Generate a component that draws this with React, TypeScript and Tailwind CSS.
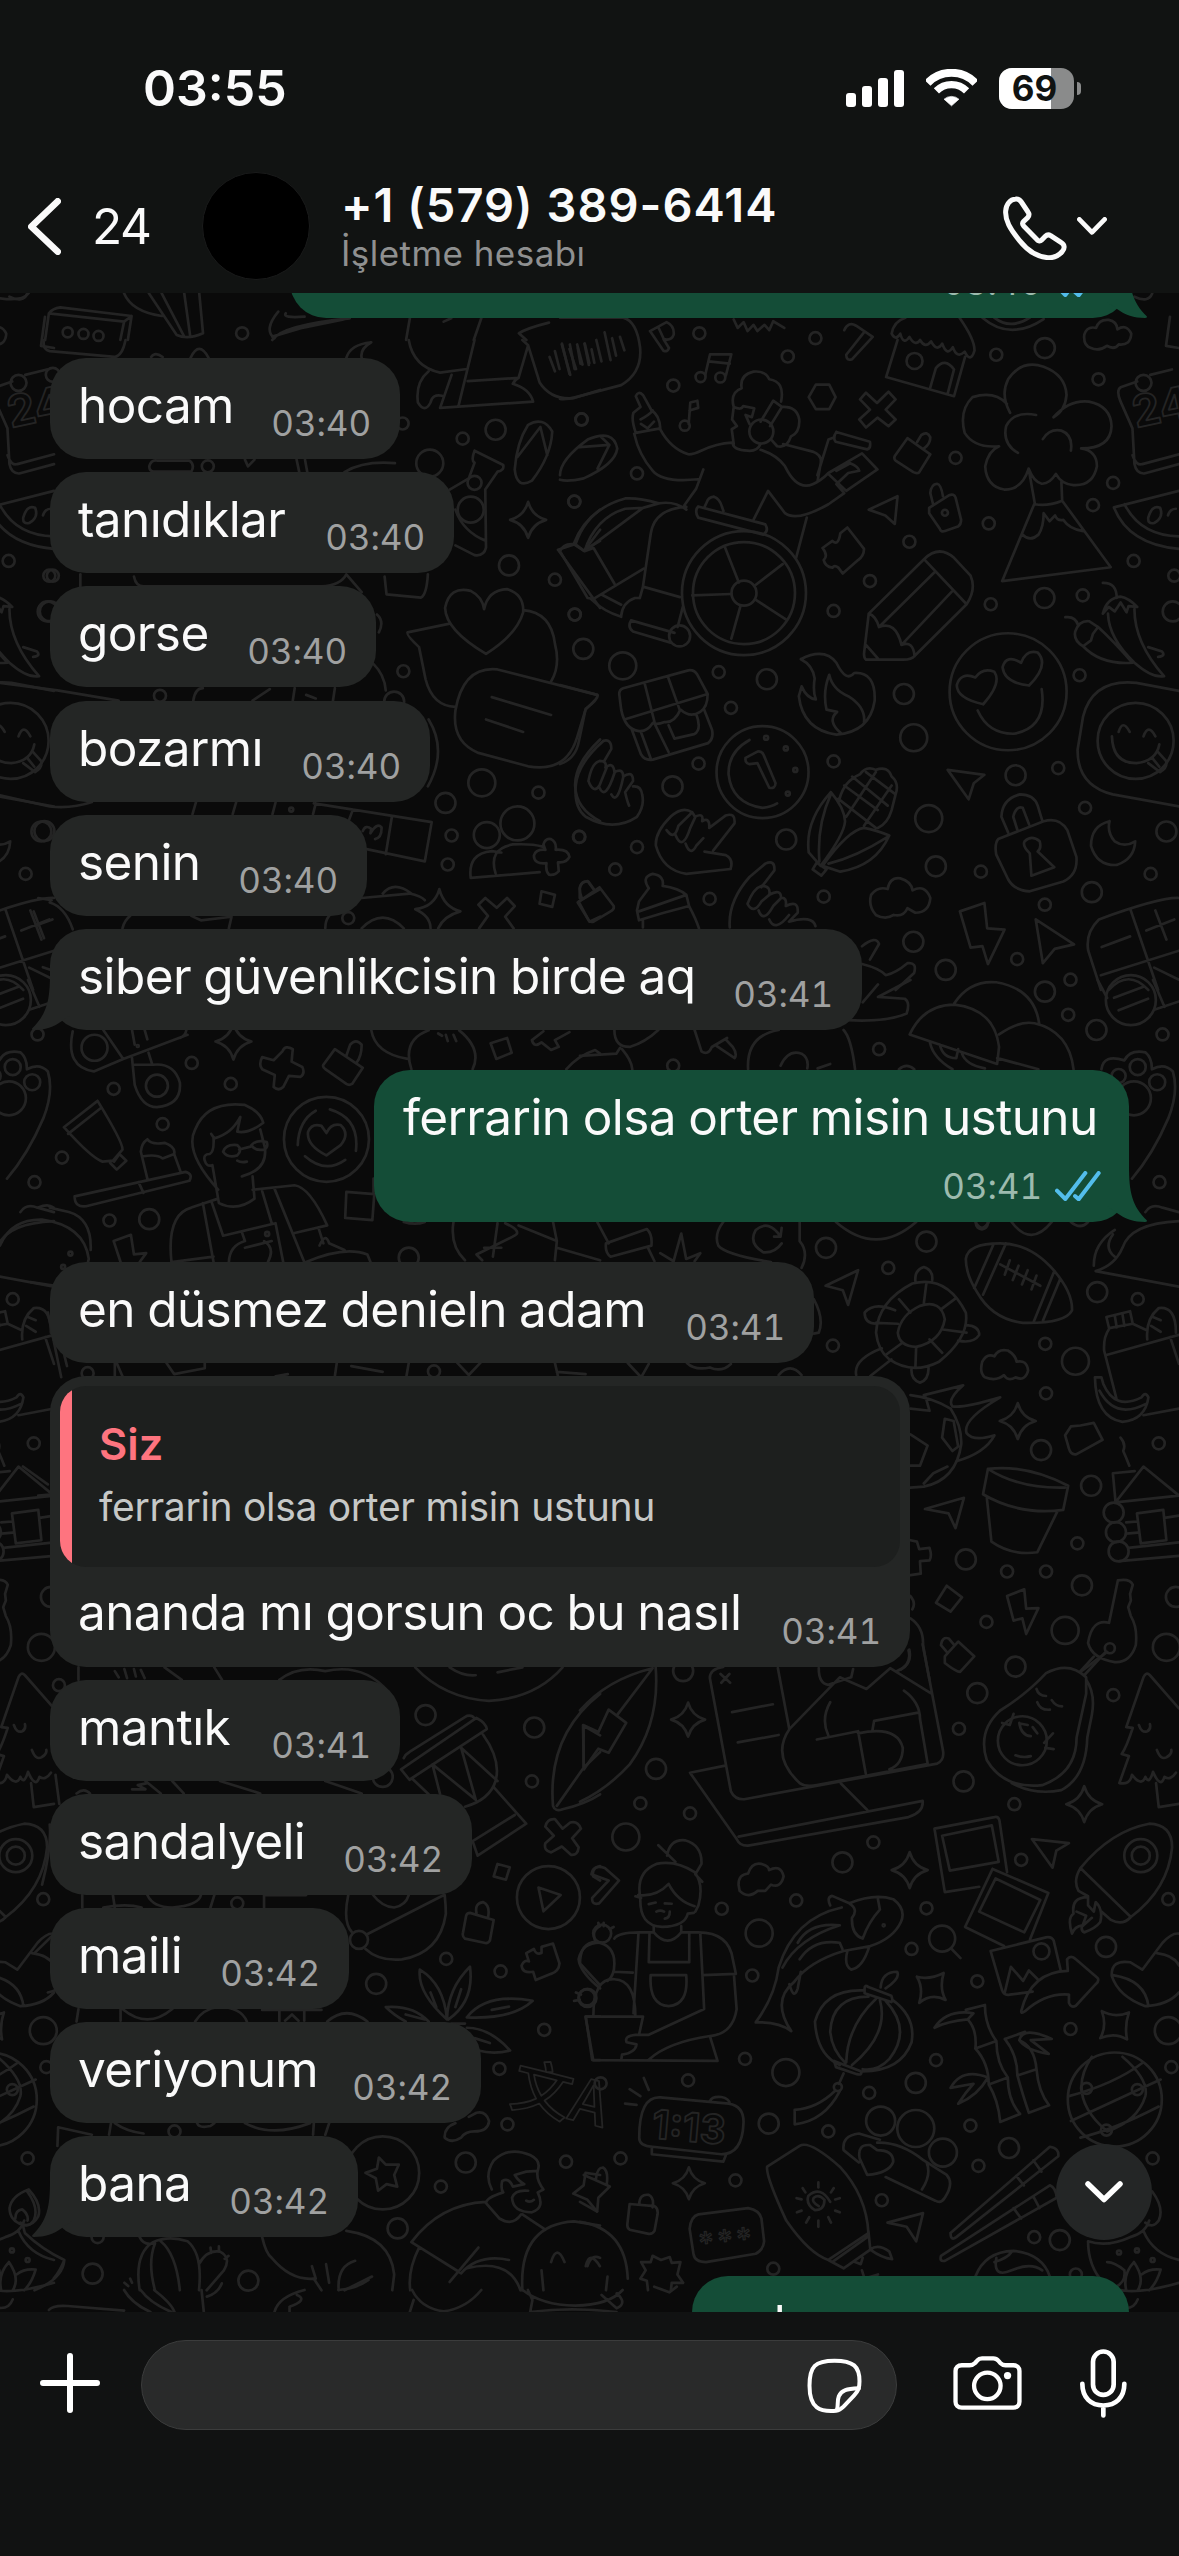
import clsx from 'clsx';

type Message = {
  text: string;
  time: string;
  width: string;
  tail?: boolean;
};

const firstGroup: Message[] = [
  { text: 'hocam', time: '03:40', width: 'w-[350px]' },
  { text: 'tanıdıklar', time: '03:40', width: 'w-[404px]' },
  { text: 'gorse', time: '03:40', width: 'w-[326px]' },
  { text: 'bozarmı', time: '03:40', width: 'w-[380px]' },
  { text: 'senin', time: '03:40', width: 'w-[317px]' },
  { text: 'siber güvenlikcisin birde aq', time: '03:41', width: 'w-[812px]', tail: true },
];

const lastGroup: Message[] = [
  { text: 'mantık', time: '03:41', width: 'w-[350px]' },
  { text: 'sandalyeli', time: '03:42', width: 'w-[422px]' },
  { text: 'maili', time: '03:42', width: 'w-[299px]' },
  { text: 'veriyonum', time: '03:42', width: 'w-[431px]' },
  { text: 'bana', time: '03:42', width: 'w-[308px]', tail: true },
];

// Every sheet is drawn in its own units and scaled onto the wallpaper.
type Sheet = {
  x: number;
  y: number;
  sx: number;
  sy: number;
  small?: number[][];
  medium?: number[][];
  large?: number[][];
  rings?: number[][];
  stars?: number[][];
  paths: string;
};

const rightTop: Sheet = {
  x: 560,
  y: 290,
  sx: 0.3948,
  sy: 0.4464,
  small: [
    [353, 97], [647, 108], [577, 149], [287, 214], [54, 290], [195, 411], [36, 474], [37, 727], [402, 856],
    [433, 936], [351, 1061], [693, 1056], [48, 1225], [195, 1248], [140, 1298], [379, 1364], [668, 1359],
    [885, 564], [785, 652], [693, 719], [1002, 376], [1086, 523], [1105, 145], [1364, 200], [1401, 432],
    [1350, 482], [1453, 607], [1556, 640], [1324, 684], [1091, 704], [1316, 863], [1262, 1071], [1330, 1160],
    [1496, 1308], [1228, 1377], [1066, 1303], [1158, 1499], [1293, 1545],
  ],
  medium: [
    [59, 804], [524, 872], [285, 1112], [573, 1231], [871, 905], [952, 1291], [895, 1460], [977, 1523],
    [1228, 130], [1227, 690], [1154, 1087], [1536, 1213], [1347, 1349], [1552, 720],
  ],
  large: [[159, 842], [896, 1003], [934, 1184]],
  rings: [
    [356, 195, 5], [406, 196, 5], [316, 304, 5], [510, 317, 12], [898, 159, 8], [975, 499, 3], [1478, 208, 8],
    [466, 679, 62], [466, 679, 51], [466, 679, 12.5], [303, 775, 10.5], [513, 1080, 46], [522, 1003, 2],
    [572, 1027, 2], [596, 1075, 2], [577, 1128, 2], [1135, 900, 58.5], [1458, 1010, 38],
  ],
  paths:
    'M0 62H160Q195 70 203 130Q208 185 155 213L40 240Q15 246 0 244M5 120L24 188M25 122L37 177M45 130L52 165M62 120L73 168M80 133L87 163M92 112L105 160M113 95L128 157M132 108L142 147M152 105L163 135' +
    'M228 92L270 72Q290 80 288 100Q282 115 262 110L276 130Q272 140 262 136ZM250 85L262 108M368 190L380 144L434 144L420 192M376 160L430 165M326 300L330 252L348 248L350 264L328 270' +
    'M192 320Q180 290 186 275L204 262L192 238Q198 225 210 235L232 270Q252 280 254 310ZM204 290Q225 280 235 270M205 300L222 310L238 295' +
    'M254 312Q280 355 325 368C350 370 370 345 435 342M188 322Q200 370 235 405Q260 432 350 424M363 402L345 445L315 482' +
    'M438 345Q440 358 475 360Q500 362 508 345M440 262Q430 230 460 220Q455 190 490 183Q520 180 530 200Q570 205 560 250M440 262L436 290L448 305L435 312L440 345M440 262Q460 270 464 260L492 265L486 285L470 280L480 300M508 295L540 248L562 262L532 305M562 262Q600 260 606 290Q608 320 585 328Q575 355 550 350L535 335' +
    'M565 345L640 362Q665 370 660 390L652 430M508 358Q550 370 570 395Q600 450 640 435Q660 428 680 410L765 366L804 402L725 450L680 412M652 415L680 335L695 330M700 318L785 340Q788 355 778 357L698 340Q690 330 700 318M700 405L735 388Q755 395 758 405L730 410L700 435L720 455L680 480Q600 520 570 500L527 450L490 515M625 510L598 600' +
    'M648 212H682L698 240L682 267H648L630 240ZM760 245L775 230L803 253L832 228L850 245L825 268L850 290L832 305L804 286L775 308L758 290L785 268Z' +
    'M875 62Q845 70 840 98Q850 115 862 98Q870 125 885 105Q900 128 912 112Q925 132 940 115Q955 140 968 120Q980 150 995 128Q1005 155 1025 138Q1040 165 1050 135Q1050 110 1012 62M855 112L826 195L998 238L1026 150M938 218L952 175Q975 150 998 178L982 232' +
    'M880 332L938 368L910 408Q905 412 895 408L850 382Q845 378 848 372ZM905 340L915 325Q930 315 938 330Q938 345 922 355M935 488L985 460Q998 455 1002 465L1016 515Q1016 525 1008 530L975 540Q965 543 962 535L935 500ZM945 480L938 455Q940 435 955 434Q965 435 970 462' +
    'M782 492L855 462L848 524L824 505ZM665 578L690 562Q705 575 710 545L728 532L770 580Q770 595 755 605L716 635L705 622Q695 615 690 622Q672 620 668 605Q680 595 665 578' +
    'M1140 275Q1115 235 1135 200Q1170 155 1225 172Q1280 190 1283 235Q1280 270 1250 285Q1290 245 1340 250Q1395 260 1397 305Q1395 355 1320 355Q1360 360 1360 395Q1350 440 1300 437Q1270 435 1256 412Q1240 435 1220 434Q1200 430 1187 400Q1170 448 1125 447Q1080 440 1077 395Q1085 360 1112 350Q1050 355 1025 320Q1010 270 1045 240Q1100 225 1132 255M1160 365Q1120 345 1130 305Q1150 270 1206 280M1223 334Q1240 310 1270 315Q1300 325 1294 360' +
    'M1187 400L1203 480Q1235 485 1272 472L1270 430M1201 480L1120 652L1395 621L1272 472M1172 548Q1190 565 1212 548Q1225 530 1225 500L1240 518L1254 505Q1260 518 1275 515Q1290 535 1325 540' +
    'M1345 130Q1325 125 1328 100Q1335 80 1358 85Q1365 65 1390 67Q1410 70 1412 88Q1435 75 1447 98Q1445 125 1415 122Q1405 135 1385 125Q1365 138 1345 130' +
    'M1462 205L1420 218Q1408 225 1420 250L1450 310L1455 390Q1460 412 1480 411L1568 390M1450 370Q1460 395 1475 390L1568 368M1495 190L1550 178' +
    'M1403 487L1568 450M1403 487Q1440 570 1568 580M1430 480Q1470 550 1568 552M1490 510Q1500 480 1520 488Q1530 510 1505 522Q1488 525 1490 510M1540 505Q1545 490 1560 490' +
    'M922 603Q960 570 998 600L1040 640Q1055 670 1030 704L898 820Q890 828 870 828L775 828Q770 825 770 815L782 725L922 603M922 603L1030 704M948 633L808 755M993 675L865 795M782 725Q800 730 808 755Q850 740 865 795Q895 785 898 820M775 795L805 825' +
    'M418 577L453 655M564 614L492 663M572 738L494 693M434 781L457 708M335 684L434 681M350 485L520 525Q530 540 515 548L350 510Q340 495 350 485M365 488L372 475Q375 465 390 463Q405 468 410 485L414 495M40 568Q70 490 165 467Q200 465 250 478Q290 472 320 492M62 585Q90 510 165 490L210 488L62 585M210 488L250 478M320 486Q240 490 230 545L210 665L202 690M0 585Q10 565 40 570L62 585L85 578L138 658M0 585L70 690L85 692L212 624M78 692Q110 720 155 732M105 682L155 705M155 730Q158 700 190 690L202 690M212 665L304 688M180 740L290 768M180 740Q170 755 185 765L280 790M311 710L298 755' +
    'M0 885L95 907Q100 915 65 938L48 1010Q40 1050 0 1062M610 827Q670 800 700 835Q725 880 745 858Q800 855 797 920Q785 990 700 996Q615 985 605 910L612 888Q625 915 648 917Q640 900 645 870Q640 840 610 827M682 862Q665 900 675 940L702 945Q675 965 712 993M682 862Q690 895 730 910Q775 935 770 968' +
    'M150 905Q150 895 160 892L325 852Q340 850 348 862L374 905Q374 935 355 945Q330 960 305 940Q290 970 265 968Q245 975 235 970Q220 990 200 988Q165 985 155 940ZM163 962L374 905M214 880L240 970M274 868L303 940M182 985L205 1040Q215 1055 235 1052L375 1015Q390 1005 385 985L365 940M205 990L230 1050M240 972L275 1035M275 975L290 1005L340 995Q360 985 345 950' +
    'M480 1008Q425 1035 427 1085Q435 1150 513 1160Q535 1158 550 1150M470 1048L500 1034Q512 1032 516 1042L546 1105Q545 1118 530 1115L500 1060L480 1062Q468 1060 470 1048' +
    'M40 1110Q45 1060 110 1010Q130 1005 130 1028L112 1055M72 1100Q80 1060 100 1055Q120 1055 115 1070Q135 1055 138 1080Q160 1070 160 1090Q185 1075 185 1100L165 1125Q170 1145 175 1155M72 1100Q85 1130 100 1110L118 1070M100 1115Q115 1145 138 1082M130 1130Q145 1155 160 1092M40 1110Q35 1160 65 1180Q135 1215 195 1180Q215 1155 208 1130Q205 1110 185 1112' +
    'M243 1245Q240 1215 280 1180Q310 1155 335 1170L342 1180Q365 1170 360 1190Q380 1180 378 1205L420 1177Q445 1170 442 1195L388 1256M366 1258L420 1266Q440 1275 432 1297L320 1308Q260 1300 243 1245M270 1210Q290 1235 300 1200L335 1170M292 1220Q310 1260 330 1205L342 1182M318 1240Q330 1270 345 1245L363 1228' +
    'M430 1428Q425 1370 480 1315L520 1285Q545 1275 543 1300L510 1338M475 1375Q490 1340 510 1335Q535 1335 530 1355Q560 1340 560 1362Q575 1360 572 1380Q605 1365 602 1395L580 1415Q640 1400 647 1425M475 1375Q490 1400 510 1370L530 1355M503 1390Q515 1420 540 1380L560 1362M530 1410Q545 1440 580 1400' +
    'M45 1372L100 1338L136 1380Q138 1388 128 1392L85 1415Q75 1418 70 1408ZM50 1362L50 1340Q55 1322 72 1325L88 1345M195 1390L200 1370L225 1340Q205 1315 235 1308Q265 1312 260 1335Q300 1340 320 1355L327 1380Q260 1395 200 1412ZM200 1392L320 1355M210 1412V1428M327 1380Q345 1410 352 1430' +
    'M708 1140Q720 1100 760 1085Q775 1065 800 1075Q830 1065 840 1090Q860 1105 850 1130L840 1165Q830 1195 805 1205M720 1110L805 1165M740 1090L830 1155M775 1080L850 1130M705 1140L800 1205M800 1080L725 1180M840 1110L770 1200M686 1125Q620 1190 630 1260L660 1290Q720 1220 722 1190Q720 1160 686 1125M686 1130Q650 1200 657 1280M665 1290Q730 1210 770 1205Q800 1210 834 1222Q800 1290 710 1303L665 1290M680 1285Q750 1270 830 1225M650 1283L675 1298L662 1312L640 1298Z' +
    'M1072 928Q1005 915 1005 885Q1015 855 1052 868Q1070 845 1100 855Q1120 880 1072 928M1188 886Q1125 880 1121 845Q1130 815 1168 835Q1180 805 1210 812Q1240 840 1188 886M1058 942Q1085 995 1150 994Q1235 980 1220 894' +
    'M1375 656Q1410 655 1410 690M1375 725Q1385 690 1420 687Q1440 690 1462 710L1440 708L1435 722L1420 700L1405 720L1390 710ZM1455 715Q1455 790 1530 865Q1500 870 1455 835Q1390 780 1388 725M1280 733Q1305 730 1312 750M1305 765Q1315 740 1340 742L1363 755L1350 770L1345 785L1325 798Q1300 785 1305 765M1363 755Q1400 785 1450 835Q1370 840 1325 798M1490 800L1525 810Q1535 820 1515 822' +
    'M1568 898L1460 880Q1350 870 1325 955L1311 1030Q1310 1110 1400 1130L1568 1157M1415 990Q1425 960 1443 990M1478 1000Q1490 970 1508 1000M1398 1000Q1400 1060 1460 1060Q1510 1055 1518 1018M1490 1060L1520 1080Q1540 1070 1535 1055L1515 1035M1500 1048L1518 1068' +
    'M1110 1230L1225 1190Q1265 1180 1285 1210L1308 1270Q1312 1310 1275 1325L1190 1347Q1150 1345 1135 1320L1105 1265Q1100 1240 1110 1230ZM1135 1215L1118 1180Q1120 1140 1165 1130Q1200 1130 1210 1155L1222 1190M1158 1208L1148 1180Q1155 1155 1172 1160L1188 1197M1190 1262Q1170 1245 1177 1235Q1195 1220 1215 1235Q1220 1250 1210 1258L1252 1293L1194 1312Z' +
    'M1392 1190Q1345 1200 1345 1245Q1360 1290 1410 1288Q1455 1275 1457 1235Q1430 1250 1405 1235Q1385 1215 1392 1190M982 1075L1075 1086L1048 1105L1035 1141ZM1013 1392L1075 1373L1082 1430L1126 1433L1084 1510L1070 1470L1040 1473ZM1205 1410L1302 1466L1253 1476L1223 1508Z' +
    'M1568 1362Q1520 1360 1365 1410Q1330 1440 1338 1480L1370 1568M1445 1388L1515 1568M1370 1535L1568 1480M1372 1472L1444 1448M1485 1435L1556 1410M1508 1390L1536 1455M1390 1568Q1440 1520 1490 1568M1505 1518L1568 1545' +
    'M800 1400Q780 1380 788 1355Q805 1335 830 1342Q835 1315 862 1318Q890 1325 893 1345Q925 1330 938 1362Q935 1395 900 1395L880 1385Q870 1405 845 1400Q825 1412 800 1400M765 1470Q800 1445 808 1465L785 1500M765 1510Q810 1520 825 1535Q850 1530 880 1508Q905 1505 897 1530L850 1568' +
    'M0 415Q0 380 70 335Q135 310 145 355Q140 390 60 422Q20 430 0 425M50 352L125 347L95 400M125 347L105 330M440 66L450 85L465 72L475 92L490 78L500 92L518 78L530 90L540 70L568 85M720 90Q730 70 750 80L792 105L740 155Q725 160 725 145L770 95M1070 62Q1140 115 1225 65M1100 62Q1140 90 1190 62M1455 15Q1490 30 1500 8M1535 125L1545 60M1568 130L1535 125',
};

const rightMiddle: Sheet = {
  x: 580,
  y: 980,
  sx: 0.382,
  sy: 0.4464,
  small: [
    [783, 155], [244, 192], [1278, 78], [1525, 122], [1517, 453], [807, 645], [1460, 715], [662, 819], [1218, 815],
    [1220, 926], [1515, 1038], [1302, 1262], [1118, 1325], [1220, 1325], [1064, 1438], [1052, 545],
  ],
  medium: [
    [1217, 26], [1352, 112], [644, 600], [907, 586], [1354, 699], [1207, 1053], [1338, 1133], [1010, 1298],
    [1314, 1356], [1140, 1538], [1560, 1382],
  ],
  large: [[1297, 854], [1270, 1457], [1535, 1495]],
  rings: [
    [1442, 45, 25], [1410, 215, 7], [1460, 195, 8], [1511, 229, 8], [1450, 265, 17], [1397, 1193, 10],
    [1403, 1237, 10], [1410, 1280, 10], [1387, 1497, 5],
  ],
  stars: [[1146, 988, 18]],
  paths:
    'M863 122Q900 55 980 55Q1085 65 1097 150L1092 188ZM980 52Q1020 0 1090 5Q1190 20 1202 98M1097 122Q1150 90 1190 97Q1280 115 1292 200M916 140Q925 175 975 200M942 145Q950 175 985 175L990 155M1000 165Q1010 190 1060 198M1092 175L1200 200' +
    'M700 90Q800 95 855 75Q865 50 850 42L780 38L865 0M780 10L740 50M1398 40L1475 15M1410 68L1487 42M1355 0L1380 40M1500 0L1530 60M1505 66L1568 48' +
    'M300 112L318 160Q335 170 345 150L385 130M358 148L405 175Q412 165 400 150L380 132M90 112Q90 150 130 150Q170 140 205 112M0 170L95 165L105 152M110 155Q135 180 137 200M45 112M440 200Q435 125 520 112M690 112Q710 130 720 200M525 192Q545 155 580 165Q600 175 595 198M622 198L655 188M835 200Q855 185 875 200' +
    'M1365 200Q1370 165 1425 180Q1440 155 1480 162Q1498 175 1497 200Q1530 185 1552 205Q1568 250 1540 310Q1500 390 1445 445' +
    'M670 542Q775 620 880 542M1130 542Q1180 600 1235 542M1035 542Q1052 568 1070 542M1285 542Q1310 560 1330 542M45 542L75 590M68 590L175 558Q190 570 187 595L80 620Q65 610 68 590M178 600L195 630M210 612L245 630L265 568L278 625L315 612L300 630M375 542Q350 570 362 595Q380 615 500 632M575 542L575 585Q600 610 580 645M528 555L525 575L508 575M525 575Q495 535 460 560Q440 590 480 610Q510 612 528 590M612 715Q640 760 625 790L612 792' +
    'M643 685L728 650L702 728L688 695ZM1010 625Q1015 590 1100 590Q1180 590 1240 650Q1290 700 1288 740Q1270 770 1160 768Q1080 760 1040 700Q1010 660 1010 625M1082 593L1032 690M1115 590L1055 705M1240 655L1188 765M1257 670L1212 763M1100 637L1205 685M1125 628L1112 660M1148 640L1133 672M1172 650L1157 682M1195 662L1182 693' +
    'M775 790Q780 720 870 680Q960 660 1010 745Q1020 800 940 855Q870 885 810 850Q780 830 775 790M832 790Q840 750 890 730Q945 715 955 760Q945 810 880 822Q835 820 832 790M835 715L865 745M907 678L900 725M985 712L945 738M1012 790L950 783M948 835L915 805M878 868L880 822M800 840L845 812M775 768L832 770M878 675Q875 650 900 643Q925 650 922 672M1012 773Q1045 775 1045 795Q1030 815 990 808M825 740Q770 720 745 745Q745 770 776 770M868 870Q865 895 890 902Q915 895 912 865M790 825Q715 850 723 885M815 850L760 887' +
    'M1060 890Q1045 880 1053 855Q1065 835 1085 843Q1095 825 1120 830Q1140 840 1143 855Q1170 850 1173 875Q1165 900 1140 890Q1120 900 1110 885Q1090 900 1060 890' +
    'M1378 755L1440 742L1447 770L1385 780ZM1400 752L1405 778M1420 748L1425 775M1385 782Q1370 800 1372 830L1405 940M1447 770L1485 785M1378 840L1568 795M1485 805Q1480 760 1515 735Q1560 730 1560 790M1500 755L1520 762M1495 775L1520 788M1475 975L1568 960M1545 800L1568 860' +
    'M1348 890H1365L1370 905Q1400 965 1470 935Q1480 920 1488 935Q1480 985 1420 990Q1350 980 1348 890M1360 920Q1400 985 1480 950' +
    'M865 930Q920 935 970 960Q1000 1000 998 1040Q985 1120 900 1135L865 1137M865 1018L910 1043L890 1088H865M905 935L915 965L865 960M955 983L978 988L990 1045L975 1055L948 1025ZM900 1128L925 1105L962 1090M900 930L1003 908Q960 940 975 955Q1000 960 1100 935Q1000 985 1012 1015Q1030 1035 1085 1020Q1060 1060 985 1078' +
    'M1270 1020L1285 1000L1310 998L1345 992L1368 1030L1300 1062Q1285 1065 1280 1050ZM1415 1025Q1430 1040 1422 1055Q1430 1070 1438 1088M1068 1095Q1170 1085 1278 1133L1265 1187Q1150 1200 1055 1152ZM1068 1095Q1150 1140 1270 1137M1065 1160L1077 1258Q1130 1290 1197 1282L1250 1190M903 1185L1005 1160L983 1228L965 1195Z' +
    'M1395 1105L1452 1100M1395 1105L1402 1170L1475 1090L1568 1155M1402 1170L1568 1155M1430 1215L1458 1213M1430 1240L1460 1238M1412 1302L1568 1290M1435 1272L1568 1260M1458 1195L1527 1187L1535 1255L1468 1262ZM1530 1205L1568 1200' +
    'M865 1255L882 1258L888 1275L915 1272Q922 1290 915 1300L890 1302L892 1330L865 1333M960 1357L1000 1383L970 1415L932 1395ZM1118 1380L1163 1365L1168 1408L1200 1407L1168 1465L1158 1430L1135 1435Z' +
    'M1408 1345Q1440 1340 1447 1355L1440 1375L1442 1390L1435 1405L1442 1425Q1460 1450 1455 1490Q1440 1530 1400 1528Q1340 1520 1330 1485Q1340 1430 1385 1440ZM1380 1505L1310 1550M955 1515L990 1482L1032 1515L995 1550Q985 1550 955 1530ZM960 1505L945 1490Q948 1470 965 1475L980 1490' +
    'M865 1430Q900 1450 898 1490L915 1568M865 1380Q880 1395 870 1410M862 1500Q870 1530 840 1545M125 858L160 890L180 860M280 858Q300 875 340 868Q370 880 395 860M520 885Q550 855 580 885' +
    'M1345 640Q1345 590 1400 560M1350 652Q1400 640 1420 600Q1440 545 1568 540M1350 652L1568 687M1480 520Q1495 500 1525 510L1568 520M1400 620Q1370 600 1395 570',
};

const rightBottom: Sheet = {
  x: 580,
  y: 1640,
  sx: 0.382,
  sy: 0.4147,
  small: [
    [158, 394], [288, 418], [768, 488], [371, 648], [566, 628], [451, 809], [907, 647], [868, 745], [1040, 823],
    [992, 214], [1137, 396], [1396, 133], [1155, 530], [1540, 625], [1284, 938], [1548, 1030], [432, 1010],
    [283, 1062], [54, 1069], [932, 1013], [757, 1092], [650, 1185], [1022, 1171], [1043, 1268], [407, 1303],
    [790, 1351], [1189, 1440], [106, 1250], [506, 1516], [1499, 1250], [1298, 1530],
  ],
  medium: [
    [199, 311], [1040, 128], [1004, 341], [687, 536], [1377, 740], [494, 1166], [879, 1068], [1123, 1225],
    [1256, 1447], [270, 75],
  ],
  large: [[120, 475], [469, 707], [539, 1043], [1540, 942]],
  rings: [
    [1158, 243, 24.5], [1468, 520, 16.5], [1468, 520, 9], [1208, 751, 8], [948, 720, 13], [58, 708, 9],
    [18, 862, 8], [675, 1078, 4], [1400, 1108, 47], [1326, 1081, 5.5], [1459, 1084, 5.5], [1378, 1182, 5.5],
    [787, 1160, 14.5], [879, 1178, 18.5], [950, 1236, 14], [795, 688, 1], [1411, 1477, 2], [1458, 1472, 2],
    [1499, 1495, 2],
  ],
  stars: [[283, 192, 17], [863, 555, 18], [1320, 396, 18], [285, 1310, 16]],
  paths:
    'M198 65Q210 200 130 300Q70 360 0 390M0 170Q70 95 190 68L98 180M8 205L48 222L75 168L121 200L75 272L48 262L10 312Z' +
    'M375 65Q340 70 340 92L395 365Q405 385 430 384L935 298Q955 290 950 265L897 10M518 68L548 215M368 82L393 103M391 82L370 103M398 174L505 155M413 247L520 229M380 303L288 320L410 480Q418 497 440 496L860 427Q900 415 897 388L415 474M683 346L752 410M548 215L680 90L750 118L812 68L918 128M548 215Q500 280 575 345Q590 355 620 350L905 300M620 240L728 220L748 322M655 150Q630 190 650 230M848 122Q890 150 890 190L910 298M765 220L770 195L885 175M728 225Q830 205 845 260Q845 300 810 312M625 68Q625 105 650 108L710 90L715 70M860 25Q870 60 830 75' +
    'M1325 90Q1280 50 1220 80Q1170 130 1100 170Q1040 220 1065 290Q1110 360 1210 350Q1300 320 1300 235L1325 130ZM1325 95Q1350 130 1340 180L1328 235Q1325 330 1260 362Q1190 375 1130 345M1195 118Q1200 135 1220 135M1197 150Q1205 170 1230 168M1235 145Q1245 160 1262 160M1150 200Q1155 230 1180 232M1155 202L1172 205M1185 210L1197 225M1140 278Q1160 285 1180 280M1105 200L1125 205L1135 178M1215 248L1238 225M1218 260L1240 263M1310 75L1345 40M1320 85L1375 30' +
    'M1568 165L1492 85Q1482 75 1475 90L1430 210L1447 212Q1430 260 1418 275L1437 280L1412 345Q1440 350 1445 325Q1470 355 1480 330Q1490 350 1500 318Q1520 360 1530 330Q1545 340 1560 320M1463 205Q1470 225 1485 220Q1495 215 1492 203M1510 265Q1520 290 1535 283Q1550 275 1548 265M1508 345L1515 403L1568 395' +
    'M928 455L1085 427Q1095 425 1098 435L1118 560M928 455L955 608L1045 595M948 472L1078 447L1096 535L968 556ZM1080 552L1226 610L1178 722M1080 552L1008 692L1110 738M1088 575L1205 627L1163 705L1045 655ZM1183 480L1280 490L1247 508L1237 549Z' +
    'M1310 550Q1390 460 1490 443Q1550 445 1550 500Q1540 600 1442 668ZM1310 550Q1290 580 1305 605L1330 618M1442 668Q1420 690 1390 675L1365 655M1330 620Q1285 620 1292 660Q1275 670 1288 708Q1295 690 1315 688Q1310 700 1320 705Q1350 695 1362 680Q1370 650 1350 632L1345 655L1330 640ZM1300 655L1325 665L1315 690L1340 670' +
    'M1075 750L1220 717Q1235 715 1240 725L1258 795M1075 750L1105 845Q1110 858 1125 855L1185 848M1112 850L1128 788L1160 822L1175 797L1200 820M1155 895Q1180 800 1277 798L1275 770Q1285 758 1298 770L1355 815Q1360 822 1350 830L1298 882Q1285 888 1280 875V855Q1220 850 1165 895Q1155 902 1155 895' +
    'M1568 708Q1550 705 1525 730L1472 795L1440 777Q1390 770 1392 810Q1410 860 1480 883Q1540 880 1568 850M1510 755Q1555 760 1568 785M1395 808Q1480 820 1488 883M973 745L996 767M882 812Q915 820 952 803Q940 840 957 868Q920 850 888 875Q900 840 882 812M1366 895Q1400 912 1437 898Q1425 930 1432 963Q1400 945 1362 960Q1380 930 1366 895' +
    'M158 622Q145 560 200 540Q250 530 300 560Q325 590 310 640L302 655M152 615Q200 620 232 588Q255 630 300 642M158 622Q155 690 215 692Q275 690 282 660L298 658M145 618L160 622M205 495L250 535M228 520Q235 480 275 483Q320 495 318 540L302 565L320 583M180 637L198 633M222 635L240 636M200 655Q210 650 220 655M235 655Q235 670 222 672M193 690V705Q230 745 265 705V690' +
    'M90 720Q100 705 155 705H193M267 705H310Q390 705 400 770L408 805L322 808M153 708L140 900M315 708L325 890L180 952H145Q115 955 122 970L148 975Q145 995 110 1000L108 1012M182 708L180 777H286V708M185 808H278Q285 880 232 883Q180 880 185 808M90 800L138 802M403 808L410 890Q400 950 340 955Q230 970 180 1012M340 955L360 1015L32 1013L15 908L165 908L155 950M35 905Q35 815 90 818Q145 820 145 908M50 830L0 780Q0 730 42 728Q90 735 90 780Q90 810 72 822M50 690L48 682M62 690V682M78 697L88 692' +
    'M30 565Q35 540 65 550L102 580L50 635Q30 640 32 622L75 580ZM415 590Q415 565 440 563Q450 535 475 540Q495 545 495 555Q525 540 533 570Q525 600 500 590L485 605L465 605Q440 625 418 605Z' +
    'M655 640Q645 620 660 617L705 635M705 635Q770 610 820 625Q855 650 840 680Q820 720 760 738L690 750Q600 775 560 825Q500 870 553 943Q520 920 460 922Q510 860 520 790Q560 670 685 645M705 635Q730 650 712 670Q710 710 740 720Q755 680 785 650L780 625M757 740Q740 790 710 795Q690 785 700 750M530 790Q570 720 680 688Q600 680 570 730M575 770Q610 720 680 730L687 745M548 830Q560 870 570 840L578 800' +
    'M745 845Q640 840 615 920Q620 1000 680 1025M818 868Q880 910 868 970Q840 1040 740 1040M745 840Q745 830 755 837L815 858Q820 868 815 873L745 852ZM665 1015L735 1040Q740 1050 725 1047L670 1030ZM755 860Q660 860 655 945Q660 990 695 1020M775 865Q700 930 697 1018M785 868Q810 950 712 1025M800 870Q870 940 810 1010Q780 1040 740 1035M787 838Q790 800 830 800Q840 815 800 840M690 1045L678 1070M668 1087Q620 1130 562 1133V1168Q640 1160 680 1088' +
    'M928 935Q960 890 1030 900L1015 915Q960 920 928 935M1010 892L1060 880Q1060 930 1090 967L1035 985Q1040 940 1015 915M1090 967Q1090 1020 1120 1055L1070 1072Q1070 1020 1035 985M1120 1055Q1120 1110 1152 1143L1100 1162Q1095 1110 1070 1072M970 1080Q1000 1030 1068 1055Q1040 1100 990 1118Q1010 1090 1030 1070L970 1080M1112 962L1165 945M1112 962Q1145 1000 1145 1050L1195 1035Q1190 980 1150 965M1145 1050Q1160 1100 1175 1140L1228 1122Q1200 1090 1195 1035M1150 965Q1160 930 1235 962L1180 965L1227 998Q1170 990 1150 965' +
    'M155 1200Q155 1100 210 1103L390 1118Q430 1125 428 1165Q425 1240 370 1240L190 1222Q155 1220 155 1200ZM340 1112Q345 1100 370 1102Q390 1105 392 1118M188 1225V1240L375 1258L382 1242M130 1083L158 1100M167 1056L180 1085M118 1118L148 1121' +
    'M1340 1005Q1270 1100 1380 1185Q1460 1160 1480 1100Q1490 1060 1420 1005M1280 1100Q1400 1070 1472 1020M1285 1160L1460 1085L1520 1060M1310 1200Q1400 1180 1515 1125' +
    'M732 1250Q725 1215 760 1218L778 1230Q820 1230 820 1258Q810 1285 752 1290ZM778 1212Q840 1210 900 1255L960 1290Q980 1310 955 1345Q945 1360 930 1352L800 1295M895 1325Q920 1290 908 1262M730 1260L690 1230Q685 1195 730 1190L785 1205' +
    'M490 1270Q485 1290 540 1400Q600 1480 650 1495L755 1430Q750 1340 680 1270Q600 1205 575 1220ZM650 1495L690 1515L760 1470L755 1425M660 1500L752 1440M720 1500L735 1505L740 1490M760 1470Q780 1455 810 1475L817 1493Q790 1490 760 1470M625 1365Q605 1355 612 1345Q625 1335 640 1350Q640 1375 615 1375Q590 1360 598 1340Q630 1315 655 1355M624 1308V1320M583 1322L590 1332M664 1322L657 1332M567 1346L580 1349M668 1349L680 1346M568 1380L580 1376M668 1376L680 1380M592 1405L600 1392M657 1405L650 1392M624 1400V1415' +
    'M970 1430L1230 1222Q1255 1225 1252 1245L985 1440Q970 1450 970 1430M1187 1255L1208 1282M1142 1292L1162 1315M945 1485L1230 1315Q1245 1320 1248 1345L955 1497Q940 1500 945 1485M1187 1342L1203 1370M1135 1370L1155 1395M805 1405L898 1382L880 1450L855 1415Z' +
    'M287 1420Q290 1390 310 1385L440 1370Q470 1375 475 1395L482 1450Q480 1470 460 1480L330 1500Q300 1500 297 1480ZM130 1360L195 1365Q205 1370 203 1385L195 1425Q190 1433 180 1432L130 1422Q123 1418 124 1408ZM155 1362Q155 1335 180 1338Q195 1345 190 1368' +
    'M160 1500L185 1500L190 1485L212 1495L235 1488L240 1502L263 1500L255 1530L270 1550L240 1550L238 1568M160 1500L172 1520L158 1540L175 1545L178 1568M10 1290L40 1302L78 1318L48 1345L45 1378L0 1355M42 1298Q45 1272 60 1272Q75 1280 70 1312M0 1403Q120 1420 125 1540M15 1510Q25 1470 52 1510M72 1535L68 1568' +
    'M1035 1535Q1060 1475 1135 1473Q1210 1480 1230 1535M1090 1490Q1080 1540 1130 1520Q1180 1500 1210 1520M1085 1500Q1120 1490 1130 1475M738 1520L745 1540L780 1530' +
    'M1330 1450Q1330 1510 1370 1550Q1420 1590 1568 1550M1330 1450Q1380 1465 1440 1440Q1480 1430 1490 1400M1475 1425Q1500 1480 1568 1495M1498 1330Q1530 1370 1515 1400Q1500 1420 1480 1405M1380 1500Q1400 1500 1425 1520Q1430 1550 1400 1560M1450 1500Q1420 1530 1430 1568M1450 1500Q1480 1540 1460 1568M1470 1530Q1490 1515 1520 1518Q1510 1550 1490 1568M1360 1565Q1370 1610 1420 1610Q1450 1615 1460 1590',
};

const leftTop: Sheet = {
  x: 0,
  y: 340,
  sx: 0.3827,
  sy: 0.4464,
  small: [
    [1052, 187], [1209, 221], [1520, 178], [1501, 362], [1450, 537], [1502, 615], [138, 528], [1054, 742],
    [418, 797], [1180, 1110], [1170, 1175], [1407, 1014], [1514, 1113], [543, 283], [910, 1295],
  ],
  medium: [[1295, 201], [1330, 505], [1164, 1037], [116, 1100], [130, 608]],
  large: [[1123, 276], [1259, 992]],
  rings: [[1240, 320, 7], [1230, 380, 13], [1352, 1083, 17], [1272, 1109, 13], [1030, 810, 10], [138, 78, 7], [761, 1052, 2]],
  stars: [[1380, 403, 18]],
  paths:
    'M115 0Q110 20 130 25L300 38Q320 35 328 0M395 38Q405 25 425 38M498 40Q520 0 545 40M905 40Q915 10 970 5Q940 20 945 40' +
    'M1068 0Q1080 60 1150 73L1220 65M1240 0L1198 148M1120 70Q1085 95 1092 140Q1110 165 1125 140Q1130 120 1155 125M1180 78L1150 152L1393 138Q1385 110 1340 98Q1345 90 1355 85L1380 12L1365 0M1222 92L1355 85M1380 12L1410 95Q1440 135 1500 130L1568 112M1436 38L1450 70M1450 25L1462 65M1468 10L1490 78M1488 20L1505 65M1508 10L1522 55M1528 8L1540 52' +
    'M1345 290Q1350 230 1380 190Q1420 170 1443 205Q1440 260 1390 315Q1350 335 1345 290M1352 262L1412 195L1430 258' +
    'M1240 248L1315 280Q1318 292 1300 295L1268 335L1270 465Q1265 485 1240 482L1190 460M1240 248Q1230 270 1240 275L1225 310L1175 335M1190 380Q1210 430 1270 450M1458 470L1568 600M1458 470L1500 458L1525 472L1568 450M1500 455Q1520 410 1568 380M1528 470L1568 425' +
    'M1270 703Q1165 650 1163 600Q1175 550 1230 562Q1260 575 1265 603Q1275 560 1325 558Q1370 570 1367 610Q1350 660 1270 703M1172 636L1065 655Q1060 660 1095 688L1112 760Q1130 820 1190 822M1367 605Q1440 610 1450 680Q1465 730 1440 765M1190 830Q1210 730 1300 738L1560 795Q1565 800 1530 828L1508 890Q1480 970 1380 955L1250 925Q1180 900 1190 830ZM1285 800L1440 840M1270 850L1367 878M1568 895Q1500 950 1503 1000Q1505 1050 1568 1078' +
    'M1230 1205Q1222 1150 1285 1145L1310 1148M1230 1205L1410 1192M1295 1195Q1275 1140 1340 1130Q1390 1128 1418 1135M1420 1130Q1425 1115 1440 1118Q1455 1125 1452 1142Q1485 1140 1488 1158Q1480 1172 1458 1170L1460 1190Q1450 1200 1435 1198Q1425 1190 1428 1172Q1395 1175 1395 1155Q1400 1140 1425 1142ZM820 1038L1128 1080L1110 1168L955 1140M922 1052L910 1080M1024 1068L1008 1152M948 1100Q955 1085 970 1095L968 1105Q985 1080 997 1092Q998 1115 980 1118' +
    'M985 615Q1005 630 990 655M1005 530L1010 570L1100 577Q1115 570 1118 525M975 725Q1005 750 1008 785M1120 850Q1170 920 1118 1000M505 808Q510 780 530 780M660 808L705 782M770 780L765 808M800 795L825 803M875 780L870 808M210 555V525M350 530Q355 552 375 552H840Q890 550 905 525L945 565M390 283Q395 268 410 270H495Q510 280 500 295H400Q390 293 390 283M640 268L648 283L665 268M775 268L782 296M797 268L803 296M900 296Q950 270 1032 276M512 1036L503 1062M617 1036L608 1062M720 1036L712 1062M825 1038L818 1062M320 1318Q325 1300 340 1290M500 1290L525 1300L605 1292L598 1318M850 1318Q850 1300 860 1290M945 1250L1070 1240Q1100 1245 1110 1255M1000 1240Q1030 1210 1075 1240M945 1318Q1000 1270 1055 1318M1148 1230Q1160 1270 1203 1280Q1160 1290 1145 1318M1148 1230Q1135 1270 1085 1275Q1125 1290 1125 1318' +
    'M1250 1265L1268 1250L1298 1272L1325 1250L1345 1268L1320 1292L1342 1318M1250 1265L1275 1290L1252 1318M1415 1235L1450 1243L1443 1270L1410 1263ZM1512 1258L1568 1230M1512 1258L1540 1303L1568 1292M1520 1250Q1505 1215 1535 1212L1555 1235' +
    'M0 768L150 785L310 808M0 1020L130 1045Q190 1050 240 1035M130 1260Q170 1270 190 1320M100 1250L135 1255M88 1280L115 1340M92 1312L137 1298M112 1405L135 1412',
};

const leftMiddle: Sheet = {
  x: 0,
  y: 1000,
  sx: 0.3827,
  sy: 0.4464,
  small: [[297, 199], [501, 141], [603, 188], [425, 278], [162, 353], [286, 494], [1134, 832], [229, 836]],
  medium: [[390, 491], [1068, 577]],
  rings: [[247, 107, 13], [410, 192, 11], [853, 312, 42.5], [698, 524, 2], [184, 568, 2], [165, 598, 2], [360, 103, 1]],
  stars: [[610, 93, 18]],
  paths:
    'M190 70Q170 150 245 160L322 132L490 78M270 67L322 132M345 67L352 100M378 67L385 88M345 130L352 190Q370 240 410 240Q475 235 470 185Q455 140 400 145H352M388 118L398 145M487 67Q485 80 470 85M738 115Q745 100 765 110L762 138L790 150Q798 165 785 172L755 170L740 195Q728 205 715 195L718 168L685 155Q675 145 685 128L715 135Z' +
    'M875 110L948 152L920 188Q912 192 905 188L850 155Q842 150 845 145ZM905 125L915 100Q930 85 945 100Q945 125 932 140M255 226L167 285Q240 355 268 362L295 360L320 335Q322 320 255 226M262 243L178 300M298 362L312 345L330 360L305 380L288 365' +
    'M570 425Q480 340 510 290Q540 225 640 235Q680 250 688 275Q650 300 620 295L628 262Q605 300 560 310L552 300M558 310Q560 340 548 345Q530 345 535 360Q540 375 555 370L572 455Q620 475 665 445L660 395M680 290L692 330Q700 380 632 395M620 360Q630 365 645 362M583 340Q590 322 620 325Q635 335 620 348Q595 355 583 340M657 325Q670 312 697 318Q702 330 690 335Q665 338 657 325M625 335L657 328' +
    'M448 587Q435 480 500 465L570 445M530 455L558 587M552 450L583 528L720 500L740 587M660 425L770 415Q810 420 855 505L770 522M685 428L710 500M717 422L795 587M832 510L845 545M598 587Q600 550 640 540L632 520M640 555L710 540M700 587Q720 555 690 540M800 587Q900 550 960 570L968 587M835 550Q850 520 860 545L900 560M448 587L558 575' +
    'M195 440L485 385Q505 390 495 405L225 462Q195 465 195 440M362 408L375 432M385 400L368 340Q370 320 385 312Q395 325 430 320Q460 330 455 345L472 385M375 350Q410 345 425 355L455 345' +
    'M825 248Q780 270 778 325M862 245Q940 265 930 338M797 350Q850 390 902 358M853 348Q800 325 805 295Q815 275 840 282L853 298Q865 275 890 280Q915 300 890 325L853 348M905 430L978 435L973 493L902 488ZM976 430V400M297 540L342 526L350 570L382 567L365 587M297 540L315 587' +
    'M0 550Q30 490 110 492Q220 505 232 580L230 587M130 465L180 475Q240 490 237 560M140 465Q125 455 100 465M140 640L80 632M140 697L175 820M125 700L160 845M125 1085L60 1045M100 1110L130 1108' +
    'M1185 497Q1175 550 1215 583M1300 500L1288 575M1265 555H1310M1320 500Q1370 520 1340 530L1245 570L1260 583M1355 505L1455 540L1450 583M1445 497L1455 540M1455 555L1568 583M1055 497Q1085 505 1110 497M970 67Q980 120 1065 132M1075 155Q1050 90 1120 68M1200 68Q1260 110 1235 155M1282 97L1325 85L1337 118L1297 132ZM1145 75L1155 80M1165 78L1170 92M1185 78L1192 92M1390 90L1420 70M1390 90Q1395 108 1415 95L1440 112L1460 105L1450 90L1488 72M1480 155Q1510 125 1555 112L1568 120' +
    'M300 813V843M305 813L320 843M435 813L455 838L535 825V813M880 813L875 843M918 820L1000 833M1068 813L1062 843M1195 813L1225 840L1255 813M1450 813L1458 843M1455 833L1530 838M720 843L752 838',
};

const leftBottom: Sheet = {
  x: 0,
  y: 1640,
  sx: 0.3827,
  sy: 0.4147,
  small: [
    [154, 109], [1390, 341], [620, 635], [1166, 769], [1308, 799], [1422, 940], [1305, 1034], [1326, 1168],
    [1479, 1258], [1152, 1318], [456, 1185], [255, 1440],
  ],
  medium: [[1112, 181], [1396, 211], [983, 829], [1217, 1260], [1039, 1419], [242, 1528], [649, 1545], [1000, 330]],
  rings: [[938, 723, 9], [1433, 621, 31.5], [1000, 1285, 36.5], [1535, 863, 9]],
  paths:
    'M1048 312L1245 188Q1270 200 1272 215L1070 337ZM1055 285Q1060 275 1070 270L1220 183Q1235 180 1240 190M1078 335L1120 372M1130 300L1150 372M1130 300L1243 385L1205 260L1300 340M1262 228Q1310 290 1295 340Q1280 385 1215 402M1290 355L1375 443L1248 520L1235 485L1345 422M1568 130Q1430 230 1445 400Q1450 415 1470 408Q1530 395 1568 372M1568 230L1525 207V308L1455 400M1525 308L1568 270' +
    'M1425 450Q1430 430 1450 432L1470 455L1490 440Q1510 435 1518 455L1495 478L1512 500Q1510 520 1492 518L1468 498L1440 512Q1420 508 1425 490L1447 472ZM1300 540L1332 548L1322 578L1290 570ZM1407 597L1465 615L1420 654ZM1228 658L1290 675L1280 725Q1275 733 1265 730L1215 720Q1207 715 1210 705L1218 665Q1220 658 1228 658M1245 658Q1240 635 1262 632Q1282 640 1275 670M1375 755L1395 745Q1400 760 1415 755L1415 740L1445 732L1462 780Q1460 800 1440 805L1400 820L1393 800Q1365 805 1363 785Q1370 770 1382 775Z' +
    'M910 615Q895 680 920 705M955 745Q990 775 1050 770Q1150 755 1165 660Q1165 640 1162 615M958 710L1160 615M975 615Q1000 645 1030 645Q1060 640 1068 615M1168 915Q1090 850 1097 795Q1160 830 1168 915Q1170 840 1228 788Q1240 870 1172 915M1125 850L1140 885M1205 842L1190 885M1220 910Q1270 850 1392 870Q1340 915 1220 910M1285 892L1330 884M1120 920Q1080 880 1008 885Q1030 905 1060 920M1060 903L1110 915M1220 935Q1280 935 1333 990Q1290 1000 1250 990M1240 960L1280 972M1180 925H1215' +
    'M990 1248L1008 1265L1042 1265L1030 1290L1038 1318L1010 1312L988 1328L982 1298L955 1285L985 1275ZM1190 1165Q1160 1175 1162 1200Q1180 1215 1205 1200Q1215 1185 1240 1185Q1275 1185 1278 1160Q1270 1135 1245 1140L1225 1150' +
    'M1285 1325Q1265 1290 1290 1255Q1330 1220 1385 1242Q1415 1255 1405 1280L1375 1282L1345 1290Q1355 1305 1370 1312L1340 1318Q1330 1295 1312 1305Q1308 1325 1315 1332Q1270 1345 1270 1358L1305 1395Q1340 1415 1362 1385M1405 1280Q1400 1300 1420 1325L1405 1332Q1425 1370 1390 1380Q1340 1380 1338 1345Q1345 1325 1380 1328M1375 1352Q1385 1358 1395 1350M1270 1355Q1150 1360 1075 1452L1205 1527Q1250 1480 1330 1495M1095 1465Q1065 1520 1072 1568M1250 1465L1175 1548M1365 1385L1425 1422M1220 1515Q1330 1490 1360 1568' +
    'M1365 1568Q1355 1410 1500 1402L1568 1412M1440 1500Q1455 1455 1475 1500M1535 1510Q1545 1480 1568 1490M1415 1520L1420 1568M1568 1290L1530 1285L1525 1315L1498 1335L1535 1350L1560 1378M1568 730Q1520 730 1512 770Q1515 800 1568 840M1568 908H1530L1550 1013H1568M1505 850L1518 855M1500 870L1515 868M1568 690Q1545 700 1555 725M1568 545Q1545 550 1550 570L1568 580' +
    'M365 1568Q350 1480 400 1452Q440 1435 490 1450Q530 1480 520 1568M405 1455Q385 1500 405 1568M420 1450Q460 1480 470 1568M520 1505Q540 1470 575 1475Q605 1490 585 1520L540 1568M550 1465L552 1478M572 1462V1475M597 1485L587 1492M365 1440Q375 1460 400 1455M325 1550L335 1558M340 1540L345 1550M685 1440Q695 1480 710 1490Q760 1545 820 1540L840 1568M905 1425Q1020 1440 1030 1530L1025 1568M815 1510L825 1540M852 1505L860 1550M885 1568Q880 1510 928 1497M900 1568L972 1535' +
    'M25 1370Q30 1340 75 1325Q110 1360 100 1390Q85 1415 60 1410Q25 1400 25 1370M40 1395Q40 1375 58 1373Q75 1385 72 1400M60 1412L65 1430Q110 1470 168 1495Q165 1540 90 1568M140 1540Q158 1520 168 1495' +
    'M150 1220L152 1175L240 1193M290 1165L285 1193M300 1165Q330 1185 375 1190M515 1165Q520 1178 550 1172L560 1165M640 1165Q710 1200 810 1165M860 1165L850 1193M820 1165L818 1193M205 890L200 920M315 890V918M320 890Q385 940 450 890M510 920Q530 890 570 885Q630 885 645 920M730 890V920M795 890V918M745 918L763 903L780 918M685 892H840M855 920Q905 880 960 920M215 615V645M295 615L300 645M385 615Q400 645 450 645Q520 640 525 615M560 615L550 645M690 645V615L800 615M270 645Q330 635 370 645M380 340L420 370M450 340L480 370M575 340L680 370M850 340L945 370M345 360H380L360 350L385 345M200 370Q220 355 235 370' +
    'M730 96Q780 60 850 75Q950 55 1015 125M1085 66Q1160 140 1278 147Q1400 140 1470 66M1175 66Q1210 88 1243 85M1300 78L1365 66M205 66V96M300 75L310 90M325 70L332 92M350 70L355 88M368 72L378 92M430 66L475 96M560 66L580 96' +
    'M130 445Q135 500 110 590M140 710L90 755M125 850Q150 845 170 830M145 325L155 395',
};

const topEdge: Sheet = {
  x: 0,
  y: 0,
  sx: 0.752,
  sy: 0.3333,
  small: [[322, 1000]],
  rings: [[90, 997, 5], [111, 1002, 5], [131, 1008, 5]],
  paths:
    'M0 895Q30 905 38 880M165 880Q175 935 215 948M198 880L235 1005Q250 1020 270 1000L265 880M215 880L245 1010M245 880L253 1010M60 1020L65 940Q70 925 80 922L175 948L170 1020M65 940L165 965L160 1020M165 965L175 948M362 1020Q375 975 465 955M362 1010L400 985L465 955M370 935Q350 990 365 1015M380 940Q375 955 405 950M545 955L540 1020M640 955L630 1020M590 965L600 955M690 1000Q700 985 730 968M690 1000L700 1020',
};

const bottomEdge: Sheet = {
  x: 0,
  y: 2240,
  sx: 0.752,
  sy: 0.3333,
  paths:
    'M187 150Q200 190 228 216M205 150Q228 190 232 216M268 150L271 216M295 130Q290 160 275 170M165 150Q175 190 200 216M65 210Q70 195 90 198L165 212M365 216Q370 170 405 150M395 165Q410 180 385 200V216M545 216L550 180M548 150Q560 205 590 214Q620 205 640 150M705 216L708 180L702 150M695 150Q720 195 765 197Q810 195 828 150M800 165L820 205Q835 190 820 160M705 216Q760 200 820 216M870 140L890 157L900 140M450 150Q475 145 490 120',
};

const Doodles = ({ x, y, sx, sy, small = [], medium = [], large = [], rings = [], stars = [], paths }: Sheet) => {
  const circles = [
    ...small.map(([cx, cy]) => [cx, cy, 6]),
    ...medium.map(([cx, cy]) => [cx, cy, 10]),
    ...large.map(([cx, cy]) => [cx, cy, 13.5]),
    ...rings,
  ];
  return (
    <g>
      <path
        d={paths}
        transform={`translate(${x} ${y}) scale(${sx} ${sy})`}
        vectorEffect="non-scaling-stroke"
      />
      {circles.map(([cx, cy, r], i) => (
        <circle key={i} cx={x + cx * sx} cy={y + cy * sy} r={r} />
      ))}
      {stars.map(([cx, cy, r], i) => (
        <path
          key={i}
          d="M0 -1Q.22 -.22 1 0Q.22 .22 0 1Q-.22 .22 -1 0Q-.22 -.22 0 -1Z"
          transform={`translate(${x + cx * sx} ${y + cy * sy}) scale(${r})`}
          vectorEffect="non-scaling-stroke"
        />
      ))}
    </g>
  );
};

const RightDoodles = () => (
  <>
    <Doodles {...rightTop} />
    <Doodles {...rightMiddle} />
    <Doodles {...rightBottom} />
    <text x={1136} y={428} fontSize={44} fontWeight={700} strokeWidth={1.8} transform="rotate(-12 1136 428)">
      24
    </text>
  </>
);

const Wallpaper = () => (
  <svg
    className="absolute inset-x-0 top-0 h-[2019px] w-[1179px] font-['Inter']"
    viewBox="0 293 1179 2019"
    fill="none"
    stroke="#242424"
    strokeWidth={2.7}
    strokeLinecap="round"
    strokeLinejoin="round"
    aria-hidden="true"
  >
    <RightDoodles />
    {/* the tile repeats every 1125px */}
    <g transform="translate(-1125 0)">
      <RightDoodles />
    </g>
    <Doodles {...leftTop} />
    <Doodles {...leftMiddle} />
    <Doodles {...leftBottom} />
    <Doodles {...topEdge} />
    <Doodles {...bottomEdge} />
    <text x={651} y={2138} fontSize={40} fontWeight={700} strokeWidth={1.8} transform="rotate(5 651 2138)">
      1:13
    </text>
    <text x={700} y={2254} fontSize={30} fontWeight={400} letterSpacing={4} strokeWidth={1.2} transform="rotate(-6 700 2254)">
      ***
    </text>
    <text
      className="font-['Noto_Sans_CJK_SC']"
      x={508}
      y={2104}
      fontSize={60}
      fontWeight={500}
      strokeWidth={1.8}
      transform="rotate(14 508 2104)"
    >
      文A
    </text>
  </svg>
);

const Ticks = () => (
  <svg className="h-[30px] w-[46px]" viewBox="347 330 138 90" fill="none" stroke="#53bdeb" strokeWidth={12} strokeLinecap="round" strokeLinejoin="round">
    <path d="M353 389L378 414L438 336M407 405L418 415L478 336" />
  </svg>
);

const Tail = ({ side }: { side: 'left' | 'right' }) => (
  <svg
    className={clsx(
      'absolute bottom-0 h-[56px] w-[50px]',
      side === 'right' ? '-right-[18px] fill-[#144d37]' : '-left-[18px] -scale-x-100 fill-[#242625]'
    )}
    viewBox="0 0 50 56"
  >
    <path d="M32 0C32 26 35 40 50 54.5Q50 56 48 56C37 56 28 53 20 47L10 40V0Z" />
  </svg>
);

const Time = ({ children, green }: { children: string; green?: boolean }) => (
  <span
    className={clsx(
      'text-[35px] leading-10 tracking-[-0.1px] tabular-nums',
      green ? 'text-[#9dbbae]' : 'text-[#a0a1a1]'
    )}
  >
    {children}
  </span>
);

const messageText = 'whitespace-nowrap text-[49.5px] leading-[60px] tracking-[-0.6px] [word-spacing:-1px]';

const Incoming = ({ text, time, width, tail }: Message) => (
  <div className={clsx('relative flex h-[101px] justify-between rounded-[36px] bg-[#242625] pl-7 pr-[29px]', width)}>
    {tail && <Tail side="left" />}
    <p className={clsx('relative pt-[17px]', messageText)}>{text}</p>
    <div className="pt-[45px]">
      <Time>{time}</Time>
    </div>
  </div>
);

const Outgoing = ({ text, time, className }: { text?: string; time: string; className: string }) => (
  <div className={clsx('relative h-[152px] self-end rounded-[36px] bg-[#144d37] pl-[29px] pr-7', className)}>
    <Tail side="right" />
    <p className={clsx('relative h-[77px] pt-[17px]', messageText)}>{text}</p>
    <div className="relative mt-[19px] flex items-center justify-end gap-[13px]">
      <Time green>{time}</Time>
      <Ticks />
    </div>
  </div>
);

const Quoted = () => (
  <div className="h-[291px] w-[860px] rounded-[36px] bg-[#242625] pt-[10px]">
    <div className="mx-[10px] flex h-[181px] overflow-hidden rounded-[26px] bg-[#1d1f1e]">
      <div className="w-3 bg-[#fe747f]" />
      <div className="pl-[27px] pt-[31px]">
        <p className="text-[43.5px] font-semibold leading-[54px] text-[#fe747f]">Siz</p>
        <p className="mt-[11px] text-[39px] leading-[50px] tracking-[-0.3px] text-[#c6c8c7]">
          ferrarin olsa orter misin ustunu
        </p>
      </div>
    </div>
    <div className="flex justify-between pl-7 pr-[29px]">
      <p className={clsx('pt-[15px]', messageText)}>ananda mı gorsun oc bu nasıl</p>
      <div className="pt-[44px]">
        <Time>03:41</Time>
      </div>
    </div>
  </div>
);

const StatusBar = () => (
  <div className="flex h-[118px] items-center pl-[143px] pr-[98px] pt-[58px]">
    <span className="text-[50px] font-semibold leading-[60px]">03:55</span>
    <svg className="ml-auto h-[37px] w-[58px]" viewBox="0 0 58 37" fill="#fff">
      <rect x="0" y="23" width="10" height="14" rx="3" />
      <rect x="16" y="16" width="10" height="21" rx="3" />
      <rect x="32" y="8" width="10" height="29" rx="3" />
      <rect x="48" y="0" width="10" height="37" rx="3" />
    </svg>
    <svg className="ml-[22px] h-[37.5px] w-[51px]" viewBox="318 86 153 113" fill="none" stroke="#fff">
      <path strokeWidth={24} d="M322.5 128A100 100 0 0 1 466.5 128" />
      <path strokeWidth={22} d="M349 152A64 64 0 0 1 440 152" />
      <path fill="#fff" strokeWidth={2} strokeLinejoin="round" d="M394.5 197L372 177A34 34 0 0 1 417 177Z" />
    </svg>
    <div className="relative ml-[22px] flex h-[41px] w-[75px] items-center justify-center overflow-hidden rounded-[13px] bg-[#8a8b8b]">
      <div className="absolute inset-y-0 left-0 w-[52px] bg-white" />
      <span className="relative -ml-1 text-[35px] font-bold leading-10 text-[#101312]">69</span>
    </div>
    <div className="ml-[3px] h-[13px] w-1 rounded-r-full bg-[#8a8b8b]" />
  </div>
);

const ChatHeader = () => (
  <header className="h-[293px] shrink-0 bg-[#111312]">
    <StatusBar />
    <div className="mt-[41px] flex h-[134px] items-center">
      <svg className="ml-7 h-[57px] w-[33px]" viewBox="84 114 99 171" fill="none" stroke="#fafafa" strokeWidth={20} strokeLinecap="round" strokeLinejoin="round">
        <path d="M173 124L94 200L173 275" />
      </svg>
      <span className="ml-[31px] w-[110px] text-[49.5px] leading-[60px] tracking-[-1.5px] text-[#fafafa]">24</span>
      <div className="size-[108px] rounded-full border border-[#1a1b1b] bg-black" />
      <div className="ml-[31px]">
        <h1 className="text-[47px] font-semibold leading-[54px] tracking-[1px] text-[#fafafa]">+1 (579) 389-6414</h1>
        <p className="text-[35px] leading-[42px] tracking-[0.45px] text-[#8f9090]">İşletme hesabı</p>
      </div>
      <svg className="ml-auto mt-1 size-16" viewBox="549 467 192 192" fill="none" stroke="#fafafa" strokeWidth={15} strokeLinejoin="round">
        <path d="M587 476C594 475 600 479 604 485L624 515C629 522 628 526 623 532L611 543C607 547 607 552 611 557L650 597C655 603 661 603 665 599L676 588C681 583 687 583 692 586L724 607C734 613 735 624 727 633C715 648 700 653 684 652C655 650 625 634 598 600C570 565 555 540 557 512C558 493 570 477 587 476Z" />
      </svg>
      <svg className="ml-[10px] mr-[72px] h-[18px] w-[30px]" viewBox="771 532 90 54" fill="none" stroke="#fafafa" strokeWidth={14} strokeLinecap="round" strokeLinejoin="round">
        <path d="M778 539L816 578L854 539" />
      </svg>
    </div>
  </header>
);

const Composer = () => (
  <footer className="flex h-[244px] shrink-0 items-start bg-[#111212] pt-7">
    <div className="ml-10 flex h-[90px] items-center">
      <svg className="-mt-1 size-[60px]" viewBox="0 0 60 60" stroke="#fff" strokeWidth={6} strokeLinecap="round">
        <path d="M3 30H57M30 3V57" />
      </svg>
      <div className="ml-[41px] flex h-[90px] w-[756px] items-center justify-end rounded-full border border-[#3b3c3c] bg-[#292a2a] pr-[34px]">
        <svg className="size-[55px]" viewBox="81 80 164 165" fill="none" stroke="#fff" strokeWidth={12} strokeLinecap="round" strokeLinejoin="round">
          <path d="M168 238C120 242 88 232 88 163C88 105 105 88 163 88C220 88 238 105 238 150C238 170 235 178 222 192L190 226C182 234 178 237 168 238Z" />
          <path d="M170 236C175 225 170 210 176 195C184 175 200 173 236 171" />
        </svg>
      </div>
      <svg className="-mt-1 ml-14 h-[54px] w-[69px]" viewBox="519 77 207 163" fill="none" stroke="#fff" strokeWidth={13} strokeLinejoin="round">
        <path d="M545 105H568C575 105 580 103 585 98L592 90C596 85 600 84 606 84H640C647 84 651 86 655 91L661 98C666 103 670 105 677 105H700C712 105 719 112 719 122V215C719 226 712 233 700 233H545C533 233 526 226 526 215V122C526 112 533 105 545 105Z" />
        <circle cx="622" cy="167" r="40" />
        <circle cx="683" cy="136" r="11" fill="#fff" stroke="none" />
      </svg>
      <svg className="-mt-1 ml-[58px] h-[69px] w-[47px]" viewBox="902 54 141 206" fill="none" stroke="#fff" strokeWidth={14} strokeLinecap="round">
        <rect x="941" y="61" width="62" height="130" rx="31" />
        <path d="M909 158C909 200 935 223 972 223S1035 200 1035 158M972 223V253" />
      </svg>
    </div>
  </footer>
);

export default function App() {
  return (
    <div className="flex h-[2556px] w-[1179px] flex-col overflow-hidden bg-[#0a0a0a] font-['Inter',sans-serif] text-[#fafafa]">
      <ChatHeader />
      <main className="relative min-h-0 flex-1 overflow-hidden">
        <Wallpaper />
        <div className="relative flex flex-col px-[50px]">
          <Outgoing time="03:40" className="-mt-[127px] w-[839px]" />
          <div className="mt-10 flex flex-col gap-[13.2px]">
            {firstGroup.map((m) => (
              <Incoming key={m.text} {...m} />
            ))}
          </div>
          <Outgoing text="ferrarin olsa orter misin ustunu" time="03:41" className="mt-10 w-[755px]" />
          <div className="mt-10 flex flex-col gap-[13px]">
            <Incoming text="en düsmez denieln adam" time="03:41" width="w-[764px]" />
            <Quoted />
            {lastGroup.map((m) => (
              <Incoming key={m.text} {...m} />
            ))}
          </div>
          <Outgoing text="aslan" time="03:42" className="mt-[39px] w-[437px]" />
        </div>
        <button className="absolute bottom-[72px] right-[27px] flex size-24 items-center justify-center rounded-full bg-[#242626]">
          <svg className="h-[22px] w-[38px]" viewBox="0 0 38 22" fill="none" stroke="#fff" strokeWidth={5.5} strokeLinecap="round" strokeLinejoin="round">
            <path d="M3 3L19 18.5L35 3" />
          </svg>
        </button>
      </main>
      <Composer />
    </div>
  );
}
